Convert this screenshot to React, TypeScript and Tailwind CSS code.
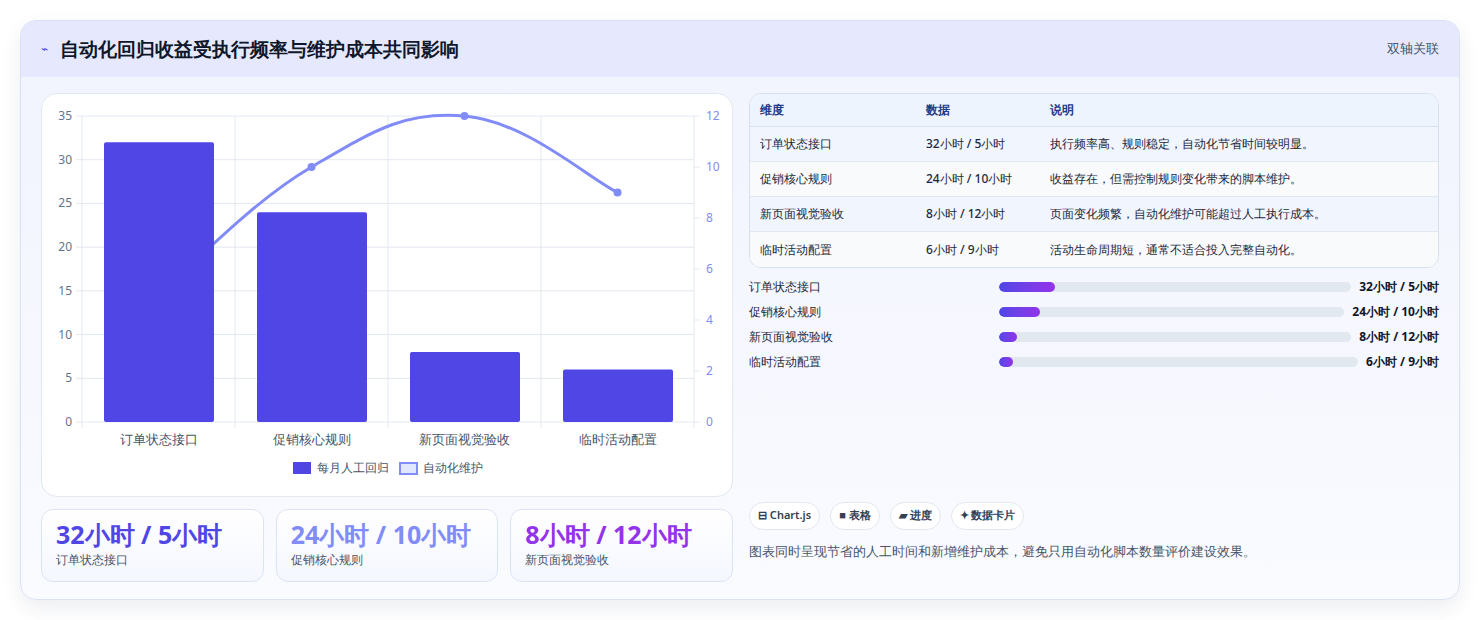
const font = "font-['Noto_Sans_CJK_SC','Noto_Sans',sans-serif]";

const rows = [
  { name: "订单状态接口", data: "32小时 / 5小时", note: "执行频率高、规则稳定，自动化节省时间较明显。", pct: 16 },
  { name: "促销核心规则", data: "24小时 / 10小时", note: "收益存在，但需控制规则变化带来的脚本维护。", pct: 12 },
  { name: "新页面视觉验收", data: "8小时 / 12小时", note: "页面变化频繁，自动化维护可能超过人工执行成本。", pct: 5 },
  { name: "临时活动配置", data: "6小时 / 9小时", note: "活动生命周期短，通常不适合投入完整自动化。", pct: 4 },
];

function Chart() {
  const x0 = 40, x1 = 652, top = 22, bot = 328;
  const cw = (x1 - x0) / 4;
  const yl = (v: number) => bot - (v / 35) * (bot - top);
  const yr = (v: number) => bot - (v / 12) * (bot - top);
  const bars = [32, 24, 8, 6];
  const line = [5, 10, 12, 9];
  const cats = ["订单状态接口", "促销核心规则", "新页面视觉验收", "临时活动配置"];
  const pts = line.map((v, i) => [x0 + cw * (i + 0.5), yr(v)]);
  let d = `M${pts[0][0]},${pts[0][1]}`;
  for (let i = 0; i < 3; i++) {
    const p0 = pts[Math.max(i - 1, 0)], p1 = pts[i], p2 = pts[i + 1], p3 = pts[Math.min(i + 2, 3)];
    const t = 0.2;
    d += ` C${p1[0] + (p2[0] - p0[0]) * t},${p1[1] + (p2[1] - p0[1]) * t} ${p2[0] - (p3[0] - p1[0]) * t},${p2[1] - (p3[1] - p1[1]) * t} ${p2[0]},${p2[1]}`;
  }
  return (
    <svg width="692" height="400" className="block">
      {[0, 5, 10, 15, 20, 25, 30, 35].map((v) => (
        <g key={v}>
          <line x1={x0 - 6} x2={x1} y1={yl(v)} y2={yl(v)} stroke="#e2e8f0" />
          <text x={x0 - 10} y={yl(v) + 4} textAnchor="end" fontSize="12" fill="#64748b">{v}</text>
        </g>
      ))}
      {[0, 2, 4, 6, 8, 10, 12].map((v) => (
        <g key={v}>
          <line x1={x1} x2={x1 + 6} y1={yr(v)} y2={yr(v)} stroke="#e2e8f0" />
          <text x={x1 + 12} y={yr(v) + 4} fontSize="12" fill="#818cf8">{v}</text>
        </g>
      ))}
      {[0, 1, 2, 3, 4].map((i) => (
        <line key={i} x1={x0 + cw * i} x2={x0 + cw * i} y1={top} y2={bot + 6} stroke="#e2e8f0" />
      ))}
      <path d={d} fill="none" stroke="#818cf8" strokeWidth="3" />
      {pts.map((p, i) => (
        <circle key={i} cx={p[0]} cy={p[1]} r="4" fill="#818cf8" />
      ))}
      {bars.map((v, i) => (
        <rect key={i} x={x0 + cw * i + 22} y={yl(v)} width={cw - 43} height={bot - yl(v)} fill="#4f46e5" rx="2" />
      ))}
      {cats.map((c, i) => (
        <text key={c} x={x0 + cw * (i + 0.5)} y={bot + 22} textAnchor="middle" fontSize="13" fill="#475569">{c}</text>
      ))}
      <rect x="251" y="368" width="18" height="12" fill="#4f46e5" />
      <text x="275" y="378" fontSize="12" fill="#475569">每月人工回归</text>
      <rect x="358" y="369" width="17" height="11" fill="#e0e7ff" stroke="#818cf8" strokeWidth="2" />
      <text x="381" y="378" fontSize="12" fill="#475569">自动化维护</text>
    </svg>
  );
}

export default function App() {
  return (
    <div className={`${font} bg-white w-[1480px] h-[620px] pt-5 px-5`}>
      <div className="rounded-2xl border border-[#dbe1f5] bg-gradient-to-b from-[#f1f3fe] to-[#fafbff] shadow-[0_8px_20px_rgba(30,41,80,0.08)] overflow-hidden h-[580px]">
        <div className="h-[56px] flex items-center justify-between px-5 bg-[#e6e9fd]">
          <div className="flex items-center gap-3">
            <span className="text-[#4f46e5] text-xs">⌁</span>
            <h1 className="text-[19px] font-bold text-[#0f172a]">自动化回归收益受执行频率与维护成本共同影响</h1>
          </div>
          <span className="text-[13px] text-[#475569]">双轴关联</span>
        </div>
        <div className="flex gap-4 px-5 pt-4">
          <div className="w-[692px] flex flex-col gap-3">
            <div className="bg-white rounded-2xl border border-[#e2e8f0] h-[404px]">
              <Chart />
            </div>
            <div className="grid grid-cols-3 gap-3">
              {[
                ["32小时 / 5小时", "订单状态接口", "text-[#4f46e5]"],
                ["24小时 / 10小时", "促销核心规则", "text-[#818cf8]"],
                ["8小时 / 12小时", "新页面视觉验收", "text-[#9333ea]"],
              ].map(([v, l, c]) => (
                <div key={l} className="h-[73px] rounded-xl border border-[#dbe4f5] bg-gradient-to-b from-white to-[#f5f7ff] px-3.5 pt-2">
                  <div className={`text-[25px] font-bold leading-8 ${c}`}>{v}</div>
                  <div className="text-xs text-[#475569] mt-0.5">{l}</div>
                </div>
              ))}
            </div>
          </div>
          <div className="flex-1 flex flex-col">
            <div className="rounded-xl border border-[#d7e0ee] overflow-hidden bg-white text-xs">
              <div className="grid grid-cols-[166px_124px_1fr] h-[33px] items-center px-2.5 bg-[#eef4fe] text-[#1e3a8a] font-semibold border-b border-[#d7e0ee]">
                <span>维度</span><span>数据</span><span>说明</span>
              </div>
              {rows.map((r, i) => (
                <div key={r.name} className={`grid grid-cols-[166px_124px_1fr] h-[35px] items-center px-2.5 text-[#1e293b] font-medium ${i < 3 ? "border-b border-[#e2e8f0]" : ""} ${i % 2 ? "bg-[#f8fafc]" : "bg-[#f1f5fe]"}`}>
                  <span>{r.name}</span><span>{r.data}</span><span>{r.note}</span>
                </div>
              ))}
            </div>
            <div className="flex flex-col gap-[7px] mt-2.5">
              {rows.map((r) => (
                <div key={r.name} className="flex items-center h-[18px] text-xs font-medium text-[#1e293b]">
                  <span className="w-[250px] shrink-0">{r.name}</span>
                  <div className="flex-1 h-2.5 rounded-full bg-[#e2e8f0] overflow-hidden">
                    <div className="h-full rounded-full bg-gradient-to-r from-[#4f46e5] to-[#9333ea]" style={{ width: `${r.pct}%` }} />
                  </div>
                  <span className="ml-2 font-bold text-[#0f172a]">{r.data}</span>
                </div>
              ))}
            </div>
            <div className="mt-auto mb-[21px]">
              <div className="flex gap-2.5">
                {["⊟ Chart.js", "■ 表格", "▰ 进度", "✦ 数据卡片"].map((t) => (
                  <span key={t} className="h-7 px-2 rounded-full border border-[#e2e8f0] bg-white text-[11px] font-semibold text-[#334155] flex items-center">{t}</span>
                ))}
              </div>
              <p className="text-[13px] text-[#475569] mt-3">图表同时呈现节省的人工时间和新增维护成本，避免只用自动化脚本数量评价建设效果。</p>
            </div>
          </div>
        </div>
      </div>
    </div>
  );
}
